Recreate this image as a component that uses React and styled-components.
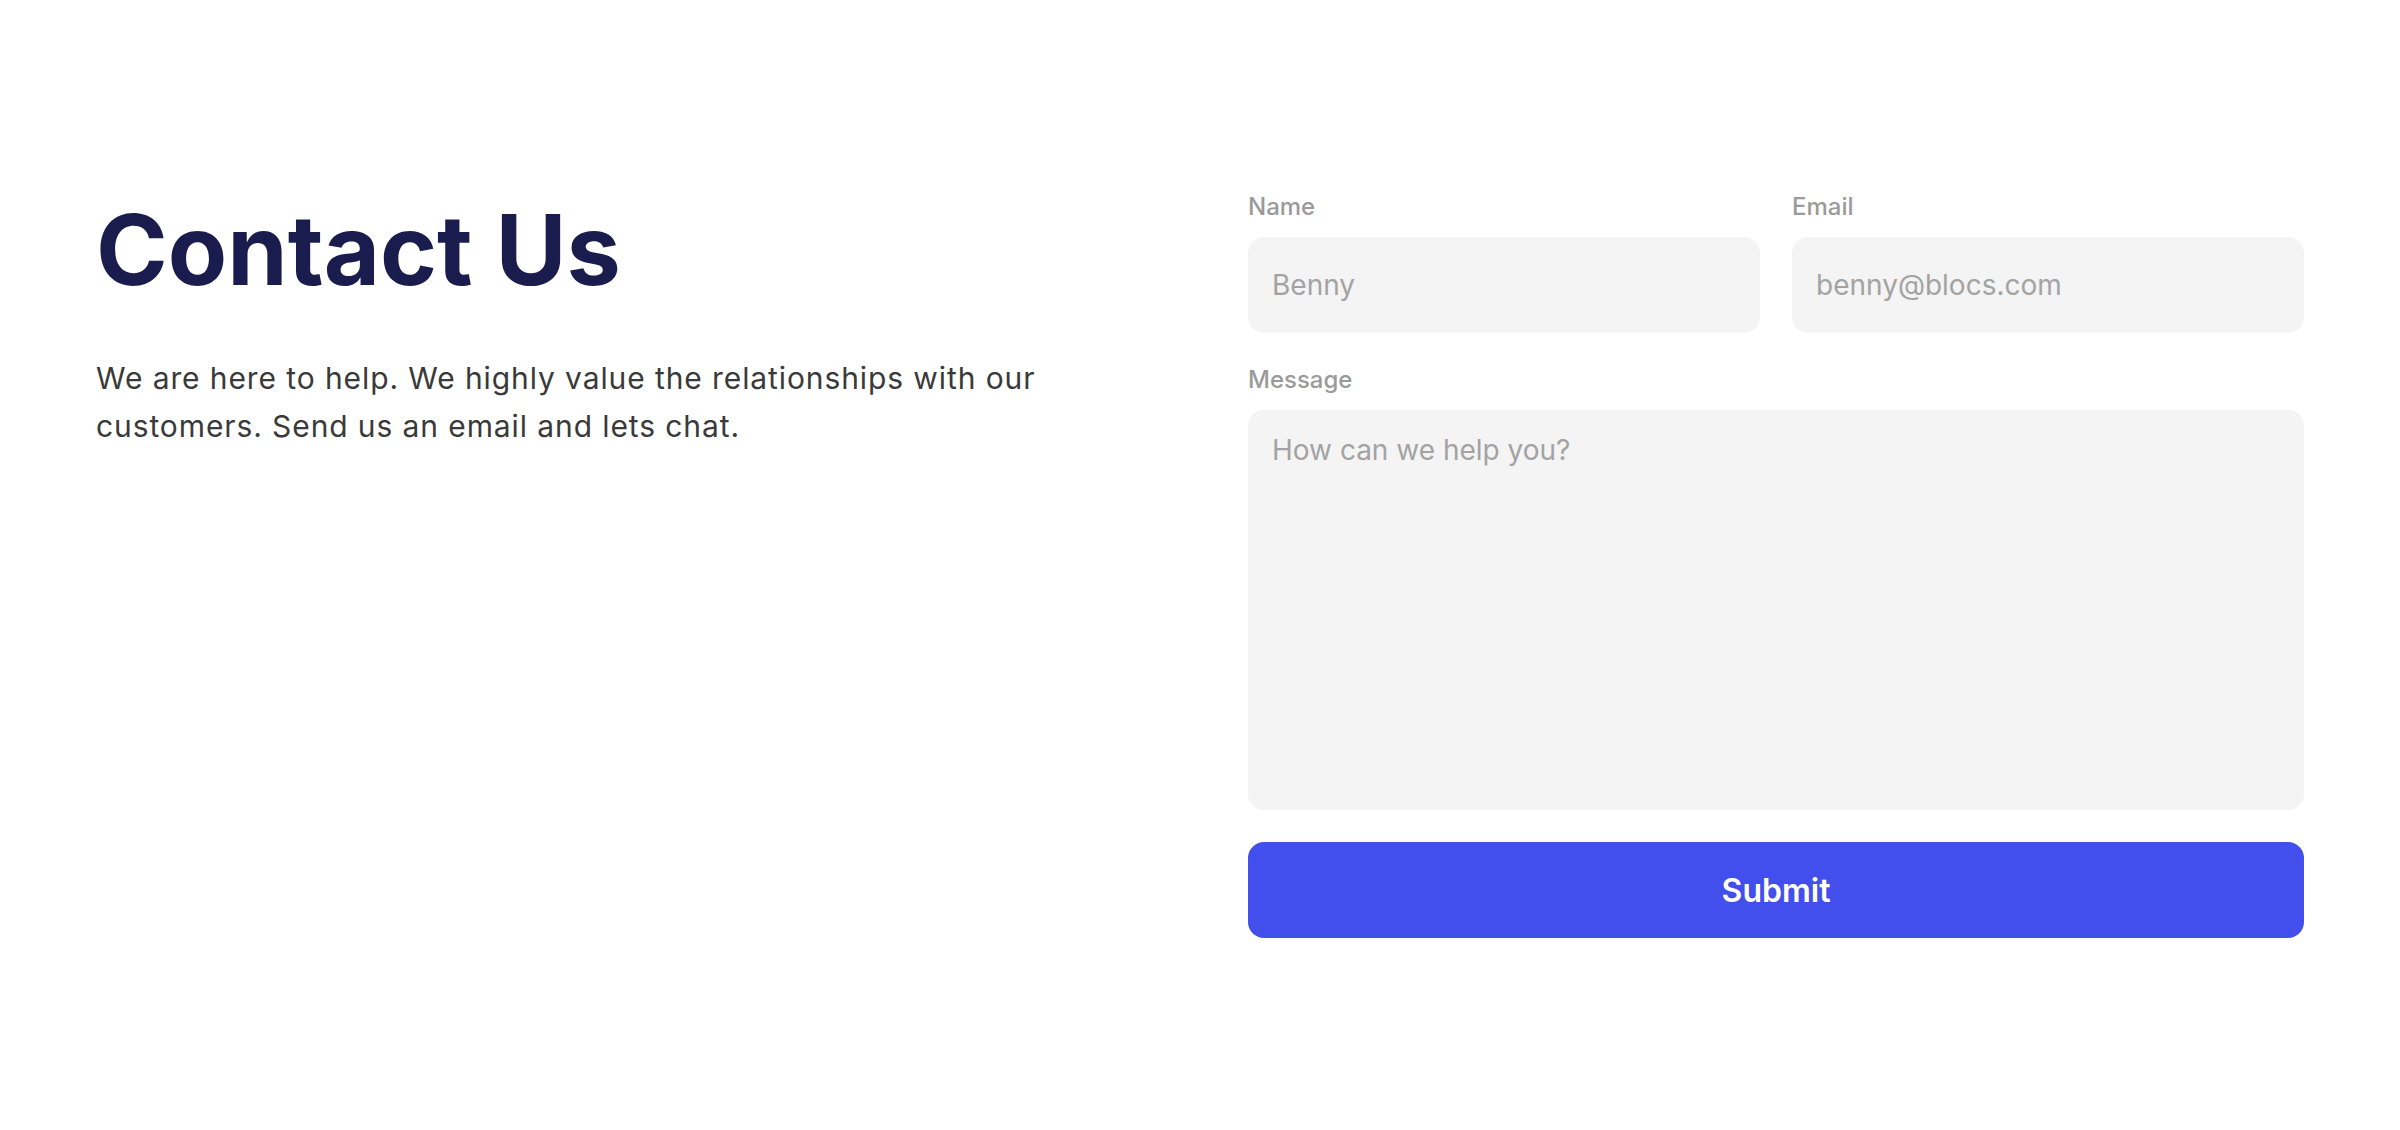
import React from "react";
import styled, { createGlobalStyle } from "styled-components";

const GlobalStyle = createGlobalStyle`
  * { box-sizing: border-box; }
  html, body { margin: 0; padding: 0; background: #ffffff; }
  body { font-family: Inter, "Noto Sans", "Liberation Sans", sans-serif; }
`;

const Section = styled.section`
  min-height: 100vh;
  display: flex;
  align-items: center;
  padding: 0 96px;
`;

const Grid = styled.div`
  width: 100%;
  display: grid;
  grid-template-columns: 1fr 1fr;
  column-gap: 96px;
  align-items: start;
`;

const Intro = styled.div`
  display: flex;
  flex-direction: column;
  gap: 46px;
`;

const Title = styled.h1`
  margin: 0;
  font-size: 97px;
  line-height: 1.2;
  font-weight: 700;
  color: #191c4d;
  letter-spacing: 0;
`;

const Lead = styled.p`
  margin: 0;
  font-size: 30px;
  line-height: 48px;
  font-weight: 400;
  letter-spacing: 0.9px;
  color: #3a3a3a;
`;

const Form = styled.form`
  display: flex;
  flex-direction: column;
  gap: 32px;
`;

const Row = styled.div`
  display: grid;
  grid-template-columns: 1fr 1fr;
  gap: 32px;
`;

const Field = styled.label`
  display: flex;
  flex-direction: column;
  gap: 16px;
`;

const LabelText = styled.span`
  font-size: 24px;
  line-height: 29px;
  font-weight: 500;
  color: #9a9a9a;
`;

const fieldBase = `
  width: 100%;
  border: none;
  outline: none;
  background: #f4f4f4;
  border-radius: 16px;
  padding: 0 24px;
  font-family: Inter, "Noto Sans", "Liberation Sans", sans-serif;
  font-size: 28px;
  color: #333;
  &::placeholder { color: #a3a3a3; opacity: 1; }
`;

const Input = styled.input`
  ${fieldBase}
  height: 96px;
`;

const TextArea = styled.textarea`
  ${fieldBase}
  height: 400px;
  padding-top: 23px;
  line-height: 34px;
  resize: none;
  display: block;
`;

const Submit = styled.button`
  height: 96px;
  width: 100%;
  border: none;
  border-radius: 16px;
  background: #424fec;
  color: #ffffff;
  font-family: Inter, "Noto Sans", "Liberation Sans", sans-serif;
  font-size: 32px;
  font-weight: 600;
  cursor: pointer;
`;

export default function App() {
  return (
    <>
      <GlobalStyle />
      <Section>
        <Grid>
          <Intro>
            <Title>Contact Us</Title>
            <Lead>
              We are here to help. We highly value the relationships with our
              customers. Send us an email and lets chat.
            </Lead>
          </Intro>
          <Form onSubmit={(e) => e.preventDefault()}>
            <Row>
              <Field>
                <LabelText>Name</LabelText>
                <Input type="text" placeholder="Benny" />
              </Field>
              <Field>
                <LabelText>Email</LabelText>
                <Input type="email" placeholder="benny@blocs.com" />
              </Field>
            </Row>
            <Field>
              <LabelText>Message</LabelText>
              <TextArea placeholder="How can we help you?" />
            </Field>
            <Submit type="submit">Submit</Submit>
          </Form>
        </Grid>
      </Section>
    </>
  );
}
